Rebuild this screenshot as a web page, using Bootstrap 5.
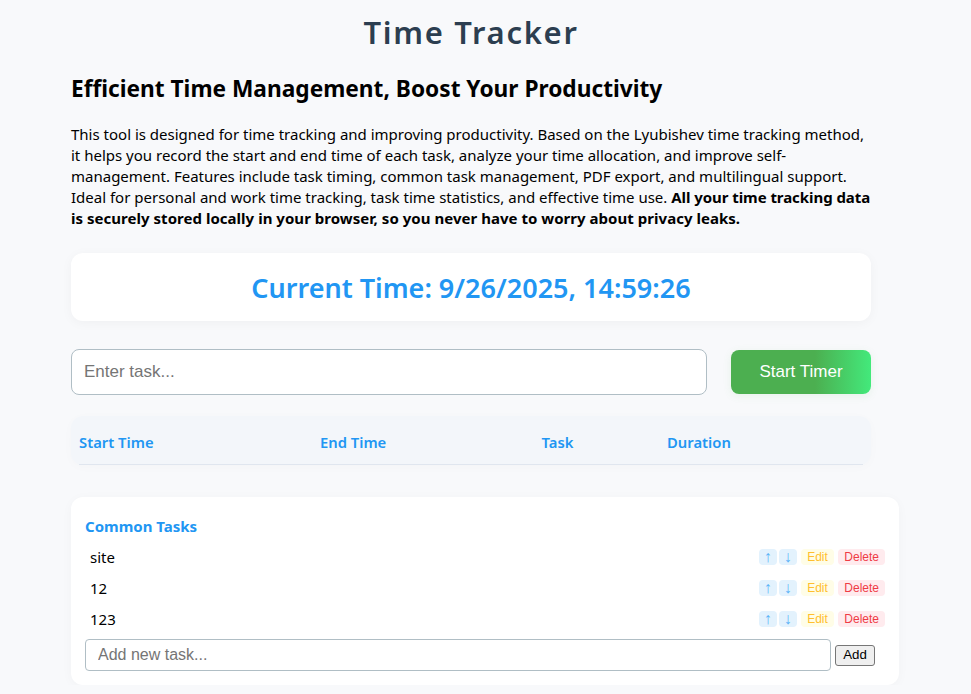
<!DOCTYPE html>
<html lang="en">
<head>
    <meta charset="UTF-8">
    <meta name="viewport" content="width=device-width, initial-scale=1">
    <title>Time Tracker</title>
    <link href="https://cdn.jsdelivr.net/npm/bootstrap@5.3.0/dist/css/bootstrap.min.css" rel="stylesheet">
    <style>
        body { background: #f8f9fb; font-family: "Noto Sans", sans-serif; color: #000; overflow: hidden; }
        .page-wrap { width: 800px; margin-left: 71px; }
        .app-title { font-size: 31px; font-weight: 600; letter-spacing: 1.7px; color: #2c3e50; line-height: 40px; padding-top: 12px; margin: 0 0 21px; text-align: center; }
        .intro-title { font-size: 22.7px; font-weight: 700; line-height: 32px; margin: 0 0 19px; }
        .intro-text { font-size: 15px; line-height: 21px; margin: 0 0 24px; }
        .intro-text b { letter-spacing: -0.06px; }
        .intro-text b.bold-tail { letter-spacing: 0.03px; }
        .clock-box { height: 68px; padding-top: 2px; border-radius: 12px; background: #fff; box-shadow: 0 2px 12px rgba(0,0,0,.04); color: #2196f3; font-size: 27px; font-weight: 600; margin-bottom: 28px; }
        .task-form { margin-bottom: 21px; }
        .task-input { font-family: "Liberation Sans", sans-serif; height: 46px; width: 636px; border: 1px solid #b0bec5; border-radius: 8px; padding: 0 12px; font-size: 17px; background: #fff; }
        .task-input::placeholder, .new-task::placeholder { color: #757575; }
        .start-btn { font-family: "Liberation Sans", sans-serif; width: 140px; height: 44px; border: 0; border-radius: 8px; color: #fff; font-size: 17px; background: linear-gradient(90deg, #4caf50 0%, #4caf50 60%, #43e97b 100%); box-shadow: 0 2px 8px rgba(76,175,80,.1); }
        .log-head { display: grid; grid-template-columns: 241px 221.5px 125.5px 1fr; height: 48px; padding-top: 4px; margin: 0 8px; align-items: center; border-bottom: 1px solid #e0e6ef; color: #2196f3; font-size: 14.8px; font-weight: 600; }
        .log-box { background: #f3f6fa; border-radius: 12px; box-shadow: 0 2px 12px rgba(0,0,0,.02); padding-top: 1px; margin-bottom: 32px; }
        .common-box { width: 828px; height: 188px; background: #fff; border-radius: 12px; padding: 19px 14px 14px; box-shadow: 0 2px 12px rgba(0,0,0,.03); }
        .common-title { font-size: 15px; font-weight: 700; color: #2196f3; line-height: 20px; margin-bottom: 5.5px; }
        .task-row { height: 31px; padding-left: 5px; font-size: 15px; }
        .mini-btn { font-family: "Liberation Sans", sans-serif; border: 0; border-radius: 4px; font-size: 12px; height: 16px; line-height: 16px; padding: 0 6.5px; }
        .arrow-btn { width: 18px; padding: 0; background: #e3f2fd; color: #5cb3f7; font-size: 16px; margin-right: 2px; }
        .edit-btn { background: #fffde7; color: #ffbf2e; margin-left: 2px; }
        .del-btn { background: #ffebee; color: #ef3b45; margin-left: 4px; padding: 0 6px; }
        .new-task-row { margin-top: 4.5px; }
        .new-task { font-family: "Liberation Sans", sans-serif; width: 746px; height: 32px; border: 1px solid #b0bec5; border-radius: 4px; padding: 0 12px; font-size: 16px; background: #fff; }
        .add-btn { font-family: "Liberation Sans", sans-serif; font-size: 13.3px; width: 40px; height: 21px; padding: 0; line-height: 18px; margin-left: 4px; border: 1px solid #767676; border-radius: 3px; background: #efefef; color: #000; }
    </style>
</head>
<body>
    <div class="page-wrap">
        <h1 class="app-title">Time Tracker</h1>
        <h2 class="intro-title">Efficient Time Management, Boost Your Productivity</h2>
        <p class="intro-text">This tool is designed for time tracking and improving productivity. Based on the Lyubishev time tracking method, it helps you record the start and end time of each task, analyze your time allocation, and improve self-management. Features include task timing, common task management, PDF export, and multilingual support. Ideal for personal and work time tracking, task time statistics, and effective time use. <b>All your time tracking data</b> <b class="bold-tail">is securely stored locally in your browser, so you never have to worry about privacy leaks.</b></p>

        <div class="clock-box d-flex align-items-center justify-content-center">Current Time: 9/26/2025, 14:59:26</div>

        <div class="task-form d-flex justify-content-between align-items-center">
            <input type="text" class="task-input" placeholder="Enter task...">
            <button type="button" class="start-btn">Start Timer</button>
        </div>

        <div class="log-box">
            <div class="log-head">
                <div>Start Time</div>
                <div>End Time</div>
                <div>Task</div>
                <div>Duration</div>
            </div>
        </div>

        <div class="common-box">
            <div class="common-title">Common Tasks</div>
            <div class="task-row d-flex justify-content-between align-items-center">
                <span>site</span>
                <div class="d-flex align-items-center">
                    <button type="button" class="mini-btn arrow-btn">↑</button>
                    <button type="button" class="mini-btn arrow-btn">↓</button>
                    <button type="button" class="mini-btn edit-btn">Edit</button>
                    <button type="button" class="mini-btn del-btn">Delete</button>
                </div>
            </div>
            <div class="task-row d-flex justify-content-between align-items-center">
                <span>12</span>
                <div class="d-flex align-items-center">
                    <button type="button" class="mini-btn arrow-btn">↑</button>
                    <button type="button" class="mini-btn arrow-btn">↓</button>
                    <button type="button" class="mini-btn edit-btn">Edit</button>
                    <button type="button" class="mini-btn del-btn">Delete</button>
                </div>
            </div>
            <div class="task-row d-flex justify-content-between align-items-center">
                <span>123</span>
                <div class="d-flex align-items-center">
                    <button type="button" class="mini-btn arrow-btn">↑</button>
                    <button type="button" class="mini-btn arrow-btn">↓</button>
                    <button type="button" class="mini-btn edit-btn">Edit</button>
                    <button type="button" class="mini-btn del-btn">Delete</button>
                </div>
            </div>
            <div class="new-task-row d-flex align-items-center">
                <input type="text" class="new-task" placeholder="Add new task...">
                <button type="button" class="add-btn">Add</button>
            </div>
        </div>
    </div>
    <script src="https://cdn.jsdelivr.net/npm/bootstrap@5.3.0/dist/js/bootstrap.bundle.min.js"></script>
</body>
</html>
